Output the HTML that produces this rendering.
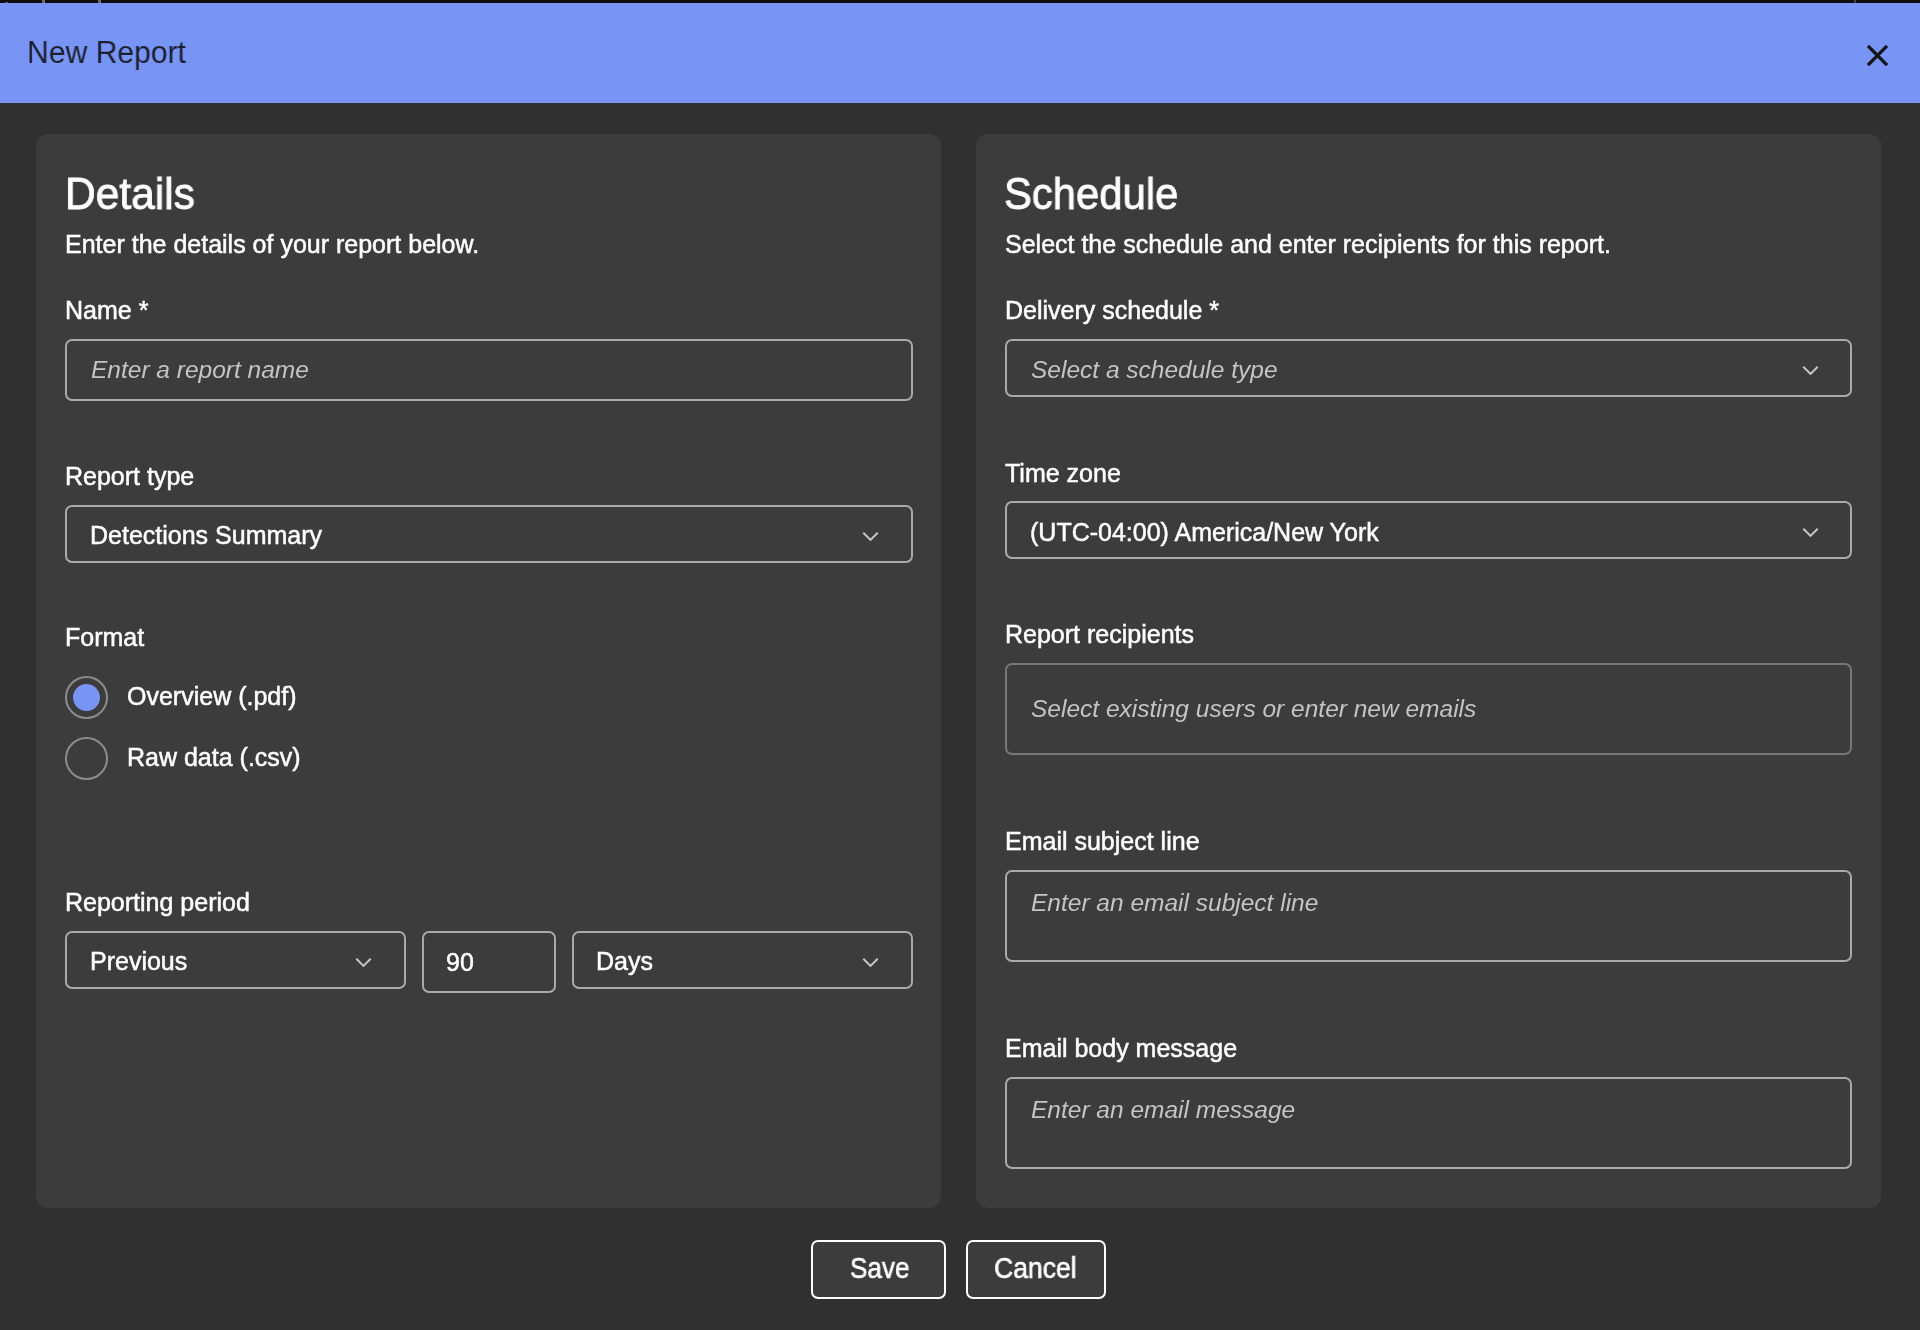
<!DOCTYPE html>
<html><head><meta charset="utf-8">
<style>
html,body{margin:0;padding:0;}
body{width:1920px;height:1330px;background:#303030;position:relative;overflow:hidden;font-family:"Liberation Sans",sans-serif;color:#fff;}
.a{position:absolute;}
.t{position:absolute;white-space:nowrap;line-height:1;will-change:transform;}
.strip{left:0;top:0;width:1920px;height:3px;background:#0e0e0e;}
.tick{top:0;width:2px;height:3px;background:#5a5a5a;}
.hdr{left:0;top:3px;width:1920px;height:100px;background:#7894f5;}
.panel{background:#3c3c3c;border-radius:12px;top:134px;height:1074px;width:905px;}
.h2{font-size:43px;color:#fff;-webkit-text-stroke:0.8px #fff;}
.lbl{font-size:25px;color:#fff;-webkit-text-stroke:0.5px #fff;}
.val{font-size:25px;color:#fff;-webkit-text-stroke:0.5px #fff;}
.ph{font-size:24.5px;color:#c4c4c4;font-style:italic;}
.box{box-sizing:border-box;border:2px solid #a9a9ab;border-radius:7px;}
.chev{position:absolute;width:17px;height:11px;}
.btn{box-sizing:border-box;border:2px solid #fff;border-radius:7px;background:#3c3c3c;}
</style></head>
<body>
<div class="a strip"></div>
<div class="a tick" style="left:42px;width:3px;background:#6e6e6e"></div>
<div class="a" style="left:5px;top:2px;width:3px;height:1px;background:#555"></div>
<div class="a tick" style="left:98px;width:3px;background:#6e6e6e"></div>
<div class="a tick" style="left:1854px;background:#444"></div>
<div class="a hdr"></div>
<div class="t" style="left:26.5px;top:37px;font-size:31px;color:#1c1f2c;transform:scaleX(0.971);transform-origin:0 0;">New Report</div>
<svg class="a" style="left:1862px;top:40px" width="32" height="32" viewBox="0 0 32 32"><path d="M5.95 5.95 L25.05 25.05 M25.05 5.95 L5.95 25.05" stroke="#151515" stroke-width="3.3" fill="none"/></svg>

<div class="a panel" style="left:36px"></div>
<div class="a panel" style="left:976px"></div>

<!-- LEFT -->
<div class="t h2" style="left:64.5px;top:171.5px;font-size:44px;transform:scaleX(0.966);transform-origin:0 0">Details</div>
<div class="t lbl" style="left:65px;top:232px">Enter the details of your report below.</div>
<div class="t lbl" style="left:65px;top:298px">Name *</div>
<div class="a box" style="left:65px;top:339px;width:848px;height:62px"></div>
<div class="t ph" style="left:91px;top:358px">Enter a report name</div>

<div class="t lbl" style="left:65px;top:464px">Report type</div>
<div class="a box" style="left:65px;top:505px;width:848px;height:58px"></div>
<div class="t val" style="left:90px;top:523px">Detections Summary</div>
<svg class="chev" style="left:862px;top:531px" viewBox="0 0 17 11"><path d="M1.3 1.7 L8.5 8.9 L15.7 1.7" stroke="#c8c8c8" stroke-width="2" fill="none"/></svg>

<div class="t lbl" style="left:65px;top:625px">Format</div>
<div class="a" style="left:65px;top:676px;width:43px;height:43px;box-sizing:border-box;border:2px solid #8c8c8c;border-radius:50%"></div>
<div class="a" style="left:73px;top:684px;width:27px;height:27px;background:#7894f5;border-radius:50%"></div>
<div class="t lbl" style="left:127px;top:684px">Overview (.pdf)</div>
<div class="a" style="left:65px;top:737px;width:43px;height:43px;box-sizing:border-box;border:2px solid #8c8c8c;border-radius:50%"></div>
<div class="t lbl" style="left:127px;top:745px">Raw data (.csv)</div>

<div class="t lbl" style="left:65px;top:890px">Reporting period</div>
<div class="a box" style="left:65px;top:931px;width:341px;height:58px"></div>
<div class="t val" style="left:90px;top:949px">Previous</div>
<svg class="chev" style="left:355px;top:957px" viewBox="0 0 17 11"><path d="M1.3 1.7 L8.5 8.9 L15.7 1.7" stroke="#c8c8c8" stroke-width="2" fill="none"/></svg>
<div class="a box" style="left:422px;top:931px;width:134px;height:62px"></div>
<div class="t val" style="left:446px;top:950px">90</div>
<div class="a box" style="left:572px;top:931px;width:341px;height:58px"></div>
<div class="t val" style="left:596px;top:949px">Days</div>
<svg class="chev" style="left:862px;top:957px" viewBox="0 0 17 11"><path d="M1.3 1.7 L8.5 8.9 L15.7 1.7" stroke="#c8c8c8" stroke-width="2" fill="none"/></svg>

<!-- RIGHT -->
<div class="t h2" style="left:1004px;top:171.5px;font-size:44px;transform:scaleX(0.95);transform-origin:0 0">Schedule</div>
<div class="t lbl" style="left:1005px;top:232px">Select the schedule and enter recipients for this report.</div>
<div class="t lbl" style="left:1005px;top:298px">Delivery schedule *</div>
<div class="a box" style="left:1005px;top:339px;width:847px;height:58px"></div>
<div class="t ph" style="left:1031px;top:358px">Select a schedule type</div>
<svg class="chev" style="left:1802px;top:365px" viewBox="0 0 17 11"><path d="M1.3 1.7 L8.5 8.9 L15.7 1.7" stroke="#c8c8c8" stroke-width="2" fill="none"/></svg>

<div class="t lbl" style="left:1005px;top:461px">Time zone</div>
<div class="a box" style="left:1005px;top:501px;width:847px;height:58px"></div>
<div class="t val" style="left:1030px;top:520px">(UTC-04:00) America/New York</div>
<svg class="chev" style="left:1802px;top:527px" viewBox="0 0 17 11"><path d="M1.3 1.7 L8.5 8.9 L15.7 1.7" stroke="#c8c8c8" stroke-width="2" fill="none"/></svg>

<div class="t lbl" style="left:1005px;top:622px">Report recipients</div>
<div class="a box" style="left:1005px;top:663px;width:847px;height:92px;border-color:#777"></div>
<div class="t ph" style="left:1031px;top:697px">Select existing users or enter new emails</div>

<div class="t lbl" style="left:1005px;top:829px">Email subject line</div>
<div class="a box" style="left:1005px;top:870px;width:847px;height:92px"></div>
<div class="t ph" style="left:1031px;top:891px">Enter an email subject line</div>

<div class="t lbl" style="left:1005px;top:1036px">Email body message</div>
<div class="a box" style="left:1005px;top:1077px;width:847px;height:92px"></div>
<div class="t ph" style="left:1031px;top:1098px">Enter an email message</div>

<!-- BUTTONS -->
<div class="a btn" style="left:811px;top:1240px;width:135px;height:59px"></div>
<div class="t val" style="left:850px;top:1253.5px;font-size:29px;transform:scaleX(0.9);transform-origin:0 0;-webkit-text-stroke:0.6px #fff">Save</div>
<div class="a btn" style="left:966px;top:1240px;width:140px;height:59px"></div>
<div class="t val" style="left:994px;top:1253.5px;font-size:29px;transform:scaleX(0.915);transform-origin:0 0;-webkit-text-stroke:0.6px #fff">Cancel</div>
</body></html>
